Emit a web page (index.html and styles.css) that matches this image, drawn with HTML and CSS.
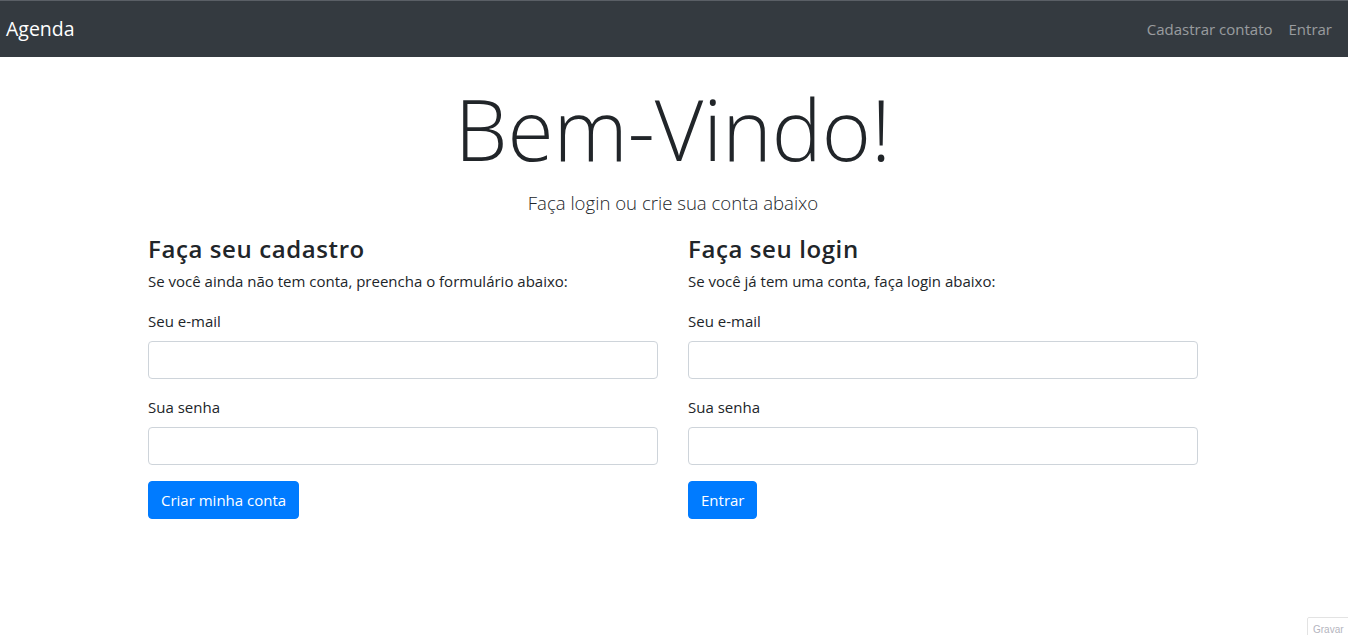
FILE: index.html
```
<!DOCTYPE html>
<html lang="pt-br">
<head>
<meta charset="utf-8">
<title>Agenda</title>
<link rel="stylesheet" href="styles.css">
</head>
<body>
<nav class="navbar">
  <a class="brand" href="#">Agenda</a>
  <ul class="nav">
    <li><a class="nav-link" href="#">Cadastrar contato</a></li>
    <li><a class="nav-link" href="#">Entrar</a></li>
  </ul>
</nav>
<main class="container">
  <header class="hero">
    <h1 class="display">Bem-Vindo!</h1>
    <p class="lead">Faça login ou crie sua conta abaixo</p>
  </header>
  <div class="row">
    <section class="col">
      <h4 class="title">Faça seu cadastro</h4>
      <p class="desc">Se você ainda não tem conta, preencha o formulário abaixo:</p>
      <form class="form">
        <div class="group">
          <label class="label">Seu e-mail</label>
          <input class="input" type="email">
        </div>
        <div class="group">
          <label class="label">Sua senha</label>
          <input class="input" type="password">
        </div>
        <button class="btn" type="button">Criar minha conta</button>
      </form>
    </section>
    <section class="col">
      <h4 class="title">Faça seu login</h4>
      <p class="desc">Se você já tem uma conta, faça login abaixo:</p>
      <form class="form">
        <div class="group">
          <label class="label">Seu e-mail</label>
          <input class="input" type="email">
        </div>
        <div class="group">
          <label class="label">Sua senha</label>
          <input class="input" type="password">
        </div>
        <button class="btn" type="button">Entrar</button>
      </form>
    </section>
  </div>
</main>
<div class="badge">Gravar</div>
</body>
</html>
```
FILE: styles.css
```
* { box-sizing: border-box; }
html, body {
  margin: 0;
  padding: 0;
}
body {
  font-family: "Open Sans", "Noto Sans", sans-serif;
  font-size: 16px;
  line-height: 1.5;
  color: #212529;
  background: #fff;
}
.navbar {
  display: flex;
  align-items: center;
  justify-content: space-between;
  height: 57px;
  background: #343a40;
  border-top: 1px solid #5a5f66;
  padding: 0 8px 0 6px;
}
.brand {
  color: #fff;
  text-decoration: none;
  font-size: 19.5px;
  line-height: 30px;
}
.nav {
  display: flex;
  list-style: none;
  margin: 0;
  padding: 0;
}
.nav-link {
  display: block;
  padding: 8px;
  color: rgba(255,255,255,.5);
  text-decoration: none;
  font-size: 15px;
}
.container {
  width: 1050px;
  margin: 0 0 0 calc(50% - 526px);
}
.hero {
  text-align: center;
  padding-top: 20px;
}
.display {
  margin: 0 0 8px;
  font-size: 84px;
  font-weight: 300;
  line-height: 103px;
  letter-spacing: 0;
}
.lead {
  margin: 0 0 16px;
  font-size: 18.6px;
  font-weight: 300;
  line-height: 30px;
  color: #212529;
}
.row {
  display: grid;
  grid-template-columns: 1fr 1fr;
  column-gap: 30px;
}
.title {
  margin: 0 0 6px;
  font-size: 24px;
  font-weight: 600;
  line-height: 29px;
  letter-spacing: .6px;
}
.desc {
  margin: 0 0 16px;
  font-size: 15px;
  line-height: 24px;
}
.group {
  margin-bottom: 16px;
}
.label {
  display: block;
  margin-bottom: 8px;
  font-size: 15px;
  line-height: 24px;
}
.input {
  display: block;
  width: 100%;
  height: 38px;
  border: 1px solid #ced4da;
  border-radius: 4px;
  padding: 6px 12px;
  font: inherit;
  background: #fff;
}
.btn {
  height: 38px;
  padding: 0 12px;
  border: 1px solid #007bff;
  border-radius: 4px;
  background: #007bff;
  color: #fff;
  font-family: inherit;
  font-size: 15px;
  line-height: 24px;
}
.badge {
  position: fixed;
  right: -10px;
  bottom: -4px;
  width: 51px;
  height: 22px;
  border: 1px solid #e3e3e3;
  border-radius: 2px;
  background: #fff;
  color: #b5b5c0;
  font-size: 10px;
  padding: 6px 0 0 5px;
  font-family: "Liberation Sans", sans-serif;
  line-height: 12px;
  overflow: hidden;
}
```
